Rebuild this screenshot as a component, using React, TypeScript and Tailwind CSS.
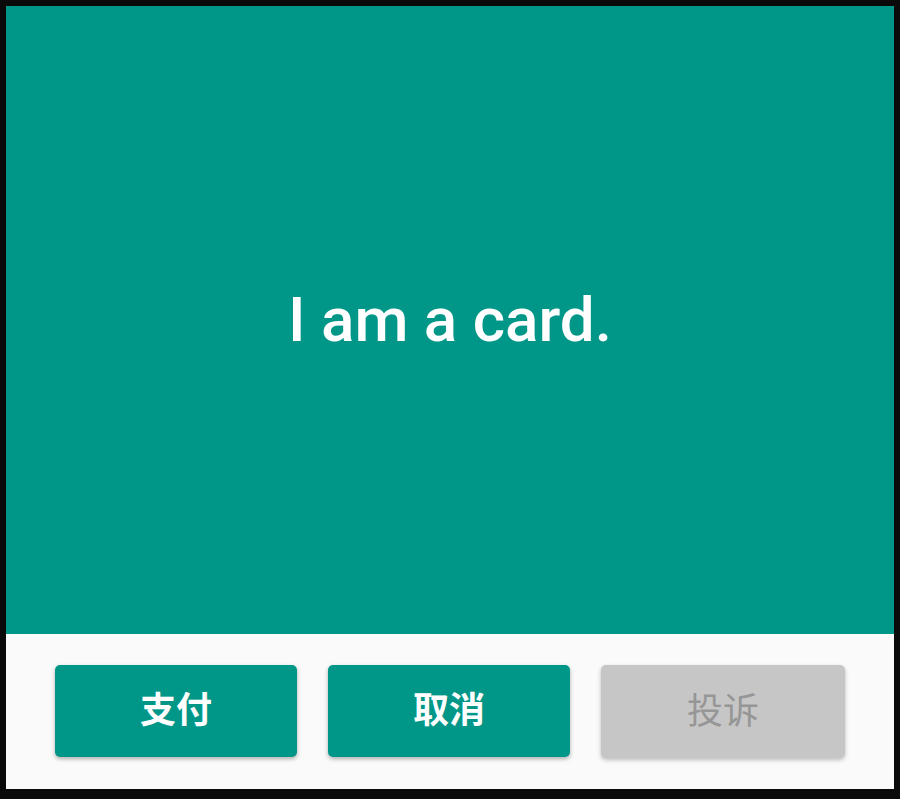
const font = { fontFamily: 'Roboto, "Noto Sans CJK SC", sans-serif' };

function ActionButton({ label, disabled }: { label: string; disabled?: boolean }) {
  return (
    <button
      type="button"
      disabled={disabled}
      className={
        disabled
          ? "h-[93px] w-[244px] rounded-[5px] bg-[#c6c6c6] text-[36px] font-normal text-[#969696] shadow-[0_2px_4px_rgba(0,0,0,0.25)]"
          : "h-[92px] w-[242px] rounded-[5px] bg-[#009688] text-[36px] font-bold text-white shadow-[0_2px_4px_rgba(0,0,0,0.3)]"
      }
    >
      {label}
    </button>
  );
}

export default function App() {
  return (
    <div className="h-[799px] w-[900px] bg-[#0a0a0a] pl-[6px] pt-[6px]" style={font}>
      <div className="flex h-[783px] w-[888px] flex-col overflow-hidden bg-[#fafafa]">
        <div className="flex h-[628px] items-center justify-center bg-[#009688]">
          <span className="text-[62px] font-medium leading-none text-white">I am a card.</span>
        </div>
        <div className="flex gap-[31px] pl-[49px] pt-[31px]">
          <ActionButton label="支付" />
          <ActionButton label="取消" />
          <ActionButton label="投诉" disabled />
        </div>
      </div>
    </div>
  );
}
